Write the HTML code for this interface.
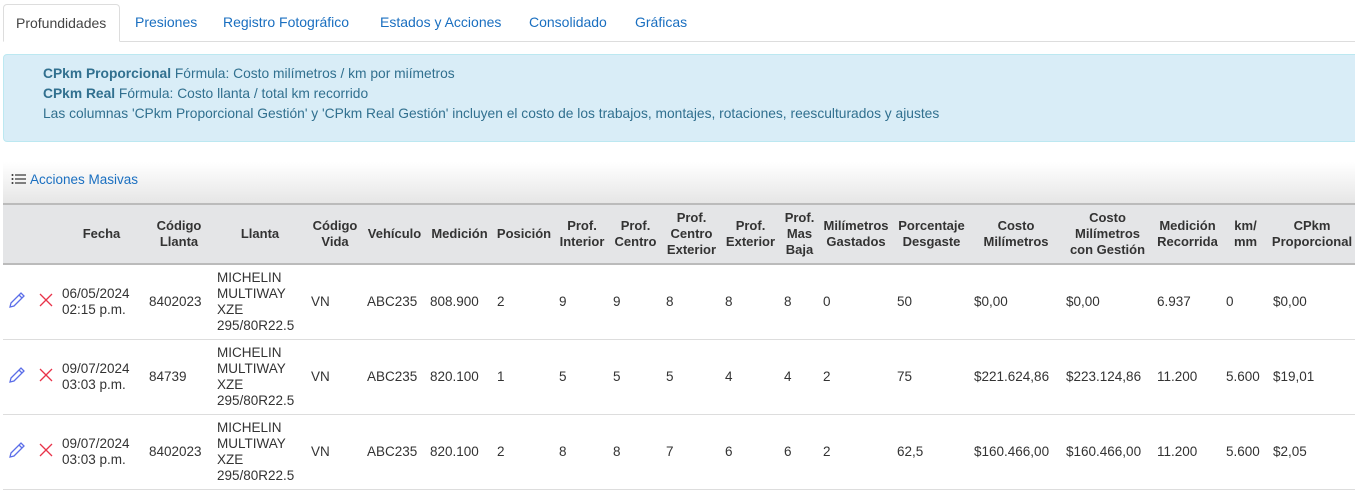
<!DOCTYPE html>
<html><head><meta charset="utf-8"><style>
*{margin:0;padding:0;box-sizing:border-box}
body{width:1355px;height:489px;overflow:hidden;background:#fff;font-family:"Liberation Sans",sans-serif;font-size:13px;color:#333;position:relative}
.tabs{position:absolute;left:3px;top:0;right:0;height:42px;border-bottom:1px solid #ddd}
.tab{position:absolute;top:14px;color:#1a6fc0;font-size:14px}
.tab.act{top:4px;left:0;height:38px;width:117px;border:1px solid #ddd;border-bottom:1px solid #fff;border-radius:4px 4px 0 0;background:#fff;color:#444;padding:10px 0 0 12px}
.info{position:absolute;left:3px;top:54px;width:1360px;height:88px;background:#d9edf7;border:1px solid #bce8f1;border-radius:4px;color:#31708f;padding:9px 0 0 39px;line-height:20px;font-size:13.8px}
.bar{position:absolute;left:3px;top:162px;width:1360px;height:41px;background:linear-gradient(#fff,#e6e6e6);color:#1a6fc0;padding:10px 0 0 8px;font-size:13.5px}
table{position:absolute;left:3px;top:203px;border-collapse:collapse;table-layout:fixed;width:1400px}
th{background:#e4e5e7;color:#333;height:60px;border-top:2px solid #bbb;border-bottom:2px solid #bbb;text-align:center;font-size:13px;line-height:16px;padding:0 2px;font-weight:600}
td{height:75px;border-bottom:1px solid #ddd;padding:0 4px;vertical-align:middle;line-height:16px;font-size:13.5px}
</style></head><body>
<div class="tabs">
<div class="tab act">Profundidades</div>
<div class="tab" style="left:132px">Presiones</div>
<div class="tab" style="left:220px">Registro Fotográfico</div>
<div class="tab" style="left:377px">Estados y Acciones</div>
<div class="tab" style="left:526px">Consolidado</div>
<div class="tab" style="left:632px">Gráficas</div>
</div>
<div class="info"><b>CPkm Proporcional</b> Fórmula: Costo milímetros / km por miímetros<br><b>CPkm Real</b> Fórmula: Costo llanta / total km recorrido<br>Las columnas 'CPkm Proporcional Gestión' y 'CPkm Real Gestión' incluyen el costo de los trabajos, montajes, rotaciones, reesculturados y ajustes</div>
<div class="bar"><svg width="16" height="12" viewBox="0 0 16 12" style="vertical-align:-1px"><g fill="#333"><circle cx="1.5" cy="2" r="1"/><circle cx="1.5" cy="6" r="1"/><circle cx="1.5" cy="10" r="1"/><rect x="4" y="1.4" width="11" height="1.2"/><rect x="4" y="5.4" width="11" height="1.2"/><rect x="4" y="9.4" width="11" height="1.2"/></g></svg> Acciones Masivas</div>
<table>
<colgroup><col style="width:55px"><col style="width:87px"><col style="width:68px"><col style="width:94px"><col style="width:56px"><col style="width:63px"><col style="width:67px"><col style="width:62px"><col style="width:54px"><col style="width:53px"><col style="width:59px"><col style="width:59px"><col style="width:39px"><col style="width:74px"><col style="width:77px"><col style="width:92px"><col style="width:91px"><col style="width:69px"><col style="width:47px"><col style="width:86px"><col style="width:100px"></colgroup>
<tr><th></th><th>Fecha</th><th>Código Llanta</th><th>Llanta</th><th>Código Vida</th><th>Vehículo</th><th>Medición</th><th>Posición</th><th>Prof. Interior</th><th>Prof. Centro</th><th>Prof. Centro Exterior</th><th>Prof. Exterior</th><th>Prof. Mas Baja</th><th>Milímetros Gastados</th><th>Porcentaje Desgaste</th><th>Costo Milímetros</th><th>Costo Milímetros con Gestión</th><th>Medición Recorrida</th><th>km/ mm</th><th>CPkm Proporcional</th><th></th></tr>
<tr><td><svg width="50" height="18"><path d="M3 16l1-4 10-10 3 3-10 10z M12 4l3 3" fill="none" stroke="#5b6ee8" stroke-width="1.3"/><path d="M33 3l12 12M45 3L33 15" stroke="#e8334a" stroke-width="1.3"/></svg></td><td>06/05/2024<br>02:15 p.m.</td><td>8402023</td><td>MICHELIN MULTIWAY XZE 295/80R22.5</td><td>VN</td><td>ABC235</td><td>808.900</td><td>2</td><td>9</td><td>9</td><td>8</td><td>8</td><td>8</td><td>0</td><td>50</td><td>$0,00</td><td>$0,00</td><td>6.937</td><td>0</td><td>$0,00</td><td></td></tr>
<tr><td><svg width="50" height="18"><path d="M3 16l1-4 10-10 3 3-10 10z M12 4l3 3" fill="none" stroke="#5b6ee8" stroke-width="1.3"/><path d="M33 3l12 12M45 3L33 15" stroke="#e8334a" stroke-width="1.3"/></svg></td><td>09/07/2024<br>03:03 p.m.</td><td>84739</td><td>MICHELIN MULTIWAY XZE 295/80R22.5</td><td>VN</td><td>ABC235</td><td>820.100</td><td>1</td><td>5</td><td>5</td><td>5</td><td>4</td><td>4</td><td>2</td><td>75</td><td>$221.624,86</td><td>$223.124,86</td><td>11.200</td><td>5.600</td><td>$19,01</td><td></td></tr>
<tr><td><svg width="50" height="18"><path d="M3 16l1-4 10-10 3 3-10 10z M12 4l3 3" fill="none" stroke="#5b6ee8" stroke-width="1.3"/><path d="M33 3l12 12M45 3L33 15" stroke="#e8334a" stroke-width="1.3"/></svg></td><td>09/07/2024<br>03:03 p.m.</td><td>8402023</td><td>MICHELIN MULTIWAY XZE 295/80R22.5</td><td>VN</td><td>ABC235</td><td>820.100</td><td>2</td><td>8</td><td>8</td><td>7</td><td>6</td><td>6</td><td>2</td><td>62,5</td><td>$160.466,00</td><td>$160.466,00</td><td>11.200</td><td>5.600</td><td>$2,05</td><td></td></tr>
</table>
</body></html>
